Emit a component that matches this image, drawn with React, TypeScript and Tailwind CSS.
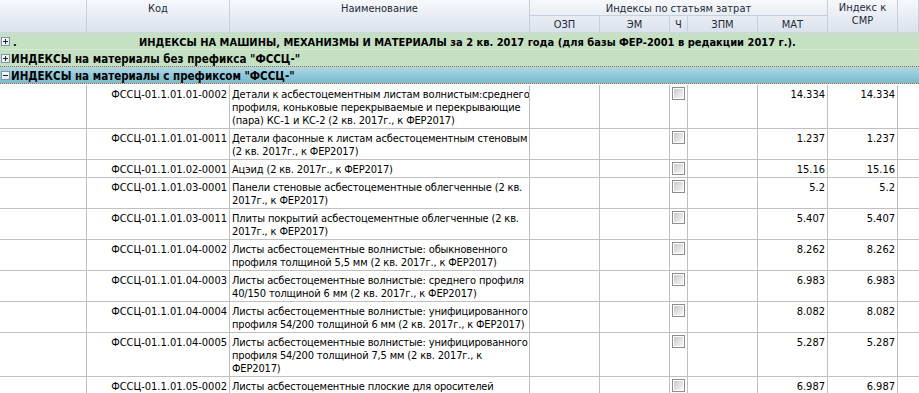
import React from 'react';

const cols = 'grid grid-cols-[87px_143px_300px_70px_70px_18px_70px_70px_70px_1fr]';

type Row = { code: string; name: string[]; mat: string };

const rows: Row[] = [
    { code: 'ФССЦ-01.1.01.01-0002', name: ['Детали к асбестоцементным листам волнистым:среднего', 'профиля, коньковые перекрываемые и перекрывающие', '(пара) КС-1 и КС-2 (2 кв. 2017г., к ФЕР2017)'], mat: '14.334' },
    { code: 'ФССЦ-01.1.01.01-0011', name: ['Детали фасонные к листам асбестоцементным стеновым', '(2 кв. 2017г., к ФЕР2017)'], mat: '1.237' },
    { code: 'ФССЦ-01.1.01.02-0001', name: ['Ацэид (2 кв. 2017г., к ФЕР2017)'], mat: '15.16' },
    { code: 'ФССЦ-01.1.01.03-0001', name: ['Панели стеновые асбестоцементные облегченные (2 кв.', '2017г., к ФЕР2017)'], mat: '5.2' },
    { code: 'ФССЦ-01.1.01.03-0011', name: ['Плиты покрытий асбестоцементные облегченные (2 кв.', '2017г., к ФЕР2017)'], mat: '5.407' },
    { code: 'ФССЦ-01.1.01.04-0002', name: ['Листы асбестоцементные волнистые: обыкновенного', 'профиля толщиной 5,5 мм (2 кв. 2017г., к ФЕР2017)'], mat: '8.262' },
    { code: 'ФССЦ-01.1.01.04-0003', name: ['Листы асбестоцементные волнистые: среднего профиля', '40/150 толщиной 6 мм (2 кв. 2017г., к ФЕР2017)'], mat: '6.983' },
    { code: 'ФССЦ-01.1.01.04-0004', name: ['Листы асбестоцементные волнистые: унифицированного', 'профиля 54/200 толщиной 6 мм (2 кв. 2017г., к ФЕР2017)'], mat: '8.082' },
    { code: 'ФССЦ-01.1.01.04-0005', name: ['Листы асбестоцементные волнистые: унифицированного', 'профиля 54/200 толщиной 7,5 мм (2 кв. 2017г., к', 'ФЕР2017)'], mat: '5.287' },
    { code: 'ФССЦ-01.1.01.05-0002', name: ['Листы асбестоцементные плоские для оросителей'], mat: '6.987' },
];

const Expander = ({ open }: { open?: boolean }) => (
    <svg width="9" height="9" viewBox="0 0 9 9" className="shrink-0">
        <defs>
            <linearGradient id={open ? 'gm' : 'gp'} x1="0" y1="0" x2="1" y2="1">
                <stop offset="0" stopColor="#ffffff" />
                <stop offset="1" stopColor="#dfe5ec" />
            </linearGradient>
        </defs>
        <rect x="0.5" y="0.5" width="8" height="8" fill={`url(#${open ? 'gm' : 'gp'})`} stroke="#8194aa" />
        <path d="M2 4.5h5" stroke="#1c2633" />
        {!open && <path d="M4.5 2v5" stroke="#1c2633" />}
    </svg>
);

const CheckBox = () => (
    <div className="w-[13px] h-[13px] border border-[#8d8d8d] bg-white p-[1px]">
        <div className="w-full h-full bg-linear-to-br from-[#c9c9c9] to-[#f8f8f8]" />
    </div>
);

const hd = 'border-r border-[#c6d0dc] text-center leading-[13px] pt-[2px] text-[#1e2a38]';
const cell = 'border-r border-[#c0c0c0]';

export default function App() {
    return (
        <div className="w-[919px] h-[393px] overflow-hidden bg-white text-[11px] text-black [font-family:'DejaVu_Sans_Condensed','DejaVu_Sans','Liberation_Sans',sans-serif]">
            {/* header */}
            <div className={`${cols} grid-rows-[16px_16px] bg-linear-to-b from-[#f6f8fb] to-[#dbe2ec] border-b border-[#cdd5df]`}>
                <div className={`${hd} row-span-2`} />
                <div className={`${hd} row-span-2`}>Код</div>
                <div className={`${hd} row-span-2`}>Наименование</div>
                <div className={`${hd} col-span-5 border-b`}>Индексы по статьям затрат</div>
                <div className={`${hd} row-span-2 !pt-[1px]`}>Индекс к<br />СМР</div>
                <div className={`${hd} row-span-2`} />
                <div className={hd}>ОЗП</div>
                <div className={hd}>ЭМ</div>
                <div className={hd}>Ч</div>
                <div className={hd}>ЗПМ</div>
                <div className={hd}>МАТ</div>
            </div>

            {/* groups */}
            <div className="h-[17px] flex items-end gap-[3px] pl-[1px] bg-[#c5e0c3] border-b border-[#d7ead5] font-bold leading-[13px]">
                <div className="self-center mt-[1px]"><Expander /></div>
                <span>.</span>
                <span className="flex-1 text-center whitespace-nowrap pr-[4px]">
                    ИНДЕКСЫ НА МАШИНЫ, МЕХАНИЗМЫ И МАТЕРИАЛЫ за 2 кв. 2017 года (для базы ФЕР-2001 в редакции 2017 г.).
                </span>
            </div>
            <div className="h-[17px] flex items-end gap-[1px] pl-[1px] bg-[#c5e0c3] border-b border-dotted border-[#b1602c] font-bold text-[11.5px] leading-[14px]">
                <div className="self-center mt-[1px]"><Expander /></div>
                <span className="whitespace-nowrap">ИНДЕКСЫ на материалы без префикса "ФССЦ-"</span>
            </div>
            <div className="h-[17px] flex items-end gap-[1px] pl-[1px] bg-linear-to-b from-[#acd7e4] to-[#79bacf] border-b border-dotted border-[#b1602c] font-bold text-[11.5px] leading-[14px]">
                <div className="self-center mt-[1px]"><Expander open /></div>
                <span className="whitespace-nowrap">ИНДЕКСЫ на материалы с префиксом "ФССЦ-"</span>
            </div>

            {/* rows */}
            {rows.map((r, i) => (
                <div key={i} className={`${cols} border-b border-[#c0c0c0] leading-[13px] ${i === 0 ? 'pt-[1px]' : ''}`}>
                    <div className={cell} />
                    <div className={`${cell} text-right pr-[2px] pt-[3px] pb-[1px] whitespace-nowrap`}>{r.code}</div>
                    <div className={`${cell} pl-[2px] pt-[3px] pb-[1px] whitespace-nowrap overflow-hidden tracking-[-0.15px]`}>
                        {r.name.map((l, j) => (
                            <div key={j}>{l}</div>
                        ))}
                    </div>
                    <div className={cell} />
                    <div className={cell} />
                    <div className={`${cell} pl-[2px] pt-[2px]`}>
                        <CheckBox />
                    </div>
                    <div className={cell} />
                    <div className={`${cell} text-right pr-[2px] pt-[3px]`}>{r.mat}</div>
                    <div className={`${cell} text-right pr-[2px] pt-[3px]`}>{r.mat}</div>
                    <div />
                </div>
            ))}
        </div>
    );
}
